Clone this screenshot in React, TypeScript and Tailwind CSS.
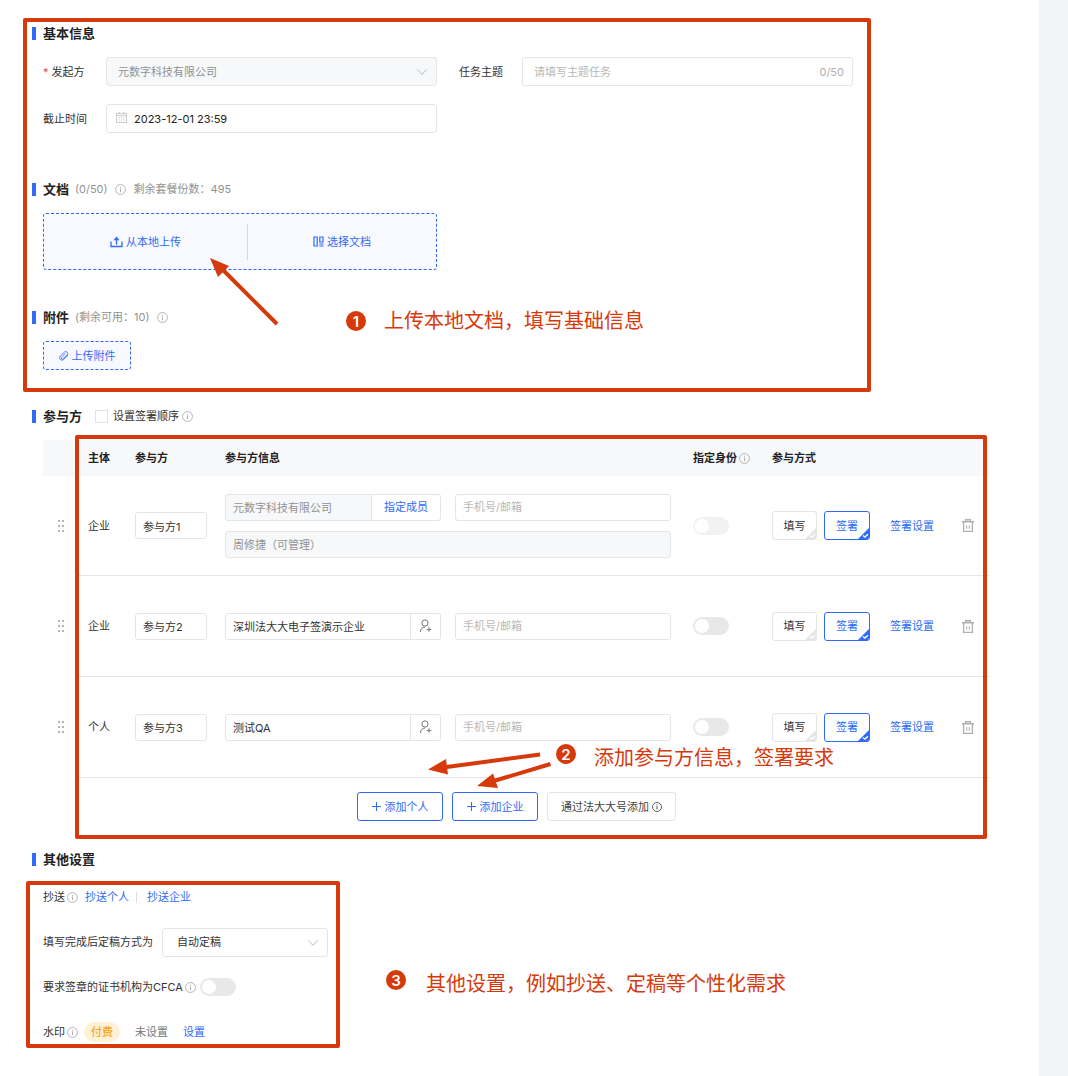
import type { ReactNode } from 'react';

function Info({ dark = false }: { dark?: boolean }) {
  return (
    <svg
      viewBox="0 0 12 12"
      fill="none"
      stroke="currentColor"
      className={dark ? 'size-[10px] shrink-0 text-[#444]' : 'size-[11px] shrink-0 text-[#b0b0b0]'}
      aria-hidden="true"
    >
      <circle cx="6" cy="6" r="5.4" strokeWidth="1" />
      <path d="M6 4.900v4M6 2.900v1.200" strokeWidth="1.100" />
    </svg>
  );
}

function Chevron() {
  return (
    <svg viewBox="0 0 12 8" fill="none" stroke="#bbb" className="pointer-events-none absolute right-[9px] top-[11px] h-[8px] w-[12px]" aria-hidden="true">
      <path d="M1.2 1.4 6 6.4l4.800-5" />
    </svg>
  );
}

function Calendar() {
  return (
    <svg viewBox="0 0 12 12" fill="none" stroke="#bdbdbd" className="absolute left-[10px] top-[8px] size-[11px]" aria-hidden="true">
      <path d="M.5 1.500h11v10H.5zM.5 4h11M3.500.2v2.400M8.500.2v2.400" strokeWidth="0.9" />
      <path d="M2.800 6.300h6.800M2.800 8.700h6.800" strokeWidth="1" strokeDasharray="1.200 1.400" />
    </svg>
  );
}

function UploadIcon() {
  return (
    <svg viewBox="0 0 13 12" fill="none" stroke="currentColor" className="h-[12px] w-[13px]" aria-hidden="true">
      <path d="M1 5.500v5h11v-5M6.500 8.800V2" strokeWidth="1.300" />
      <path d="M3.500 4.200 6.500.6l3 3.600z" fill="currentColor" stroke="none" />
    </svg>
  );
}

function DocsIcon() {
  return (
    <svg viewBox="0 0 11 11" fill="none" stroke="currentColor" className="size-[11px]" aria-hidden="true">
      <path d="M1 1h3.200v9H1zM6.800 1H10v5H6.800zM6.200 8h4.400M6.200 10h4.400" strokeWidth="1.200" />
    </svg>
  );
}

function ClipIcon() {
  return (
    <svg viewBox="0 0 24 24" fill="none" stroke="currentColor" strokeWidth="2" className="size-[10px]" aria-hidden="true">
      <path d="M22 9.500 11.800 20.200a6 6 0 0 1-8.600-8.500L13 2.800a4.600 4.600 0 0 1 6.600 6.500L10 18.300a2.600 2.600 0 0 1-3.800-3.600l9-8.800" />
    </svg>
  );
}

function PersonAdd() {
  return (
    <svg viewBox="0 0 13 14" fill="none" stroke="#777" className="h-[14px] w-[13px]" aria-hidden="true">
      <circle cx="6" cy="4" r="3.100" />
      <path d="M1.500 13c0-3 1.800-5 4.600-5M10 8.200v4.600M7.700 10.500h4.600" />
    </svg>
  );
}

function Trash() {
  return (
    <svg viewBox="0 0 12 13" fill="none" stroke="#b0b0b0" className="h-[13px] w-[12px]" aria-hidden="true">
      <path d="M0 2.700h12M3.600 2.500V.8h4.800v1.700" strokeWidth="1.400" />
      <path d="M1.600 3v9.300h8.800V3" strokeWidth="1.300" />
      <path d="M4.700 6.200v3.600M7.300 6.200v3.600" />
    </svg>
  );
}

function Grip() {
  return (
    <svg viewBox="0 0 7 13" fill="#b5b5b5" className="ml-[15px] h-[13px] w-[7px]" aria-hidden="true">
      {[0, 5, 10].map((y) => (
        <g key={y}>
          <rect x="0" y={y} width="2" height="2" />
          <rect x="4" y={y} width="2" height="2" />
        </g>
      ))}
    </svg>
  );
}

function Plus() {
  return (
    <svg viewBox="0 0 9 9" fill="none" stroke="currentColor" className="size-[9px]" aria-hidden="true">
      <path d="M4.500 0v9M0 4.500h9" strokeWidth="1.100" />
    </svg>
  );
}

function Title({ text, children }: { text: string; children?: ReactNode }) {
  return (
    <div className="flex h-[22px] items-center">
      <span className="h-[13px] w-1 bg-[#2f6bf6]" />
      <h2 className="ml-[7px] text-[13px] font-bold text-[#222]">{text}</h2>
      {children}
    </div>
  );
}

function Toggle({ label, disabled = false, id }: { label?: string; disabled?: boolean; id?: string }) {
  return (
    <input
      type="checkbox"
      role="switch"
      id={id}
      aria-label={label}
      disabled={disabled}
      className="block h-[18px] w-[36px] shrink-0 appearance-none rounded-full bg-[#e8e8e8] p-[2px] before:block before:size-[14px] before:rounded-full before:bg-white checked:bg-[#2f6bf6] checked:before:ml-[18px] disabled:bg-[#f2f2f2]"
    />
  );
}

function Choice({ text, on = false }: { text: string; on?: boolean }) {
  return (
    <button
      type="button"
      aria-pressed={on}
      className={
        on
          ? 'relative h-[29px] w-[46px] overflow-hidden rounded-[3px] border border-[#2f6bf6] text-[#2f6bf6]'
          : 'relative h-[29px] w-[45px] overflow-hidden rounded-[3px] border border-[#e5e5e5] text-[#333]'
      }
    >
      {text}
      <svg viewBox="0 0 13 13" fill="none" className="absolute bottom-[-1px] right-[-1px] size-[13px]" aria-hidden="true">
        <path d="M13 0v13H0z" fill={on ? '#2f6bf6' : '#e5e5e5'} />
        <path d="m6 8.600 1.800 1.500L11 7.200" stroke="#fff" strokeWidth="1.300" />
      </svg>
    </button>
  );
}

function Note({ n, children, className }: { n: number; children: ReactNode; className: string }) {
  return (
    <div className={className}>
      <span className="flex size-[20px] shrink-0 items-center justify-center rounded-full bg-[#d6390a] text-[15px] font-semibold leading-none text-white">
        {n}
      </span>
      <p className="whitespace-nowrap text-[20px] leading-[28px] text-[#d6390a]">{children}</p>
    </div>
  );
}

const inputBase = 'block h-[27px] w-full min-w-0 border border-[#e5e5e5] px-[7px] text-[#333] outline-none placeholder:text-[#b8b8b8]';
const fieldBase = 'block h-[29px] w-full appearance-none rounded-[3px] border border-[#e5e5e5] outline-none placeholder:text-[#b8b8b8]';

const parties = [
  { kind: '企业', role: '参与方1', name: '元数字科技有限公司', member: '周修捷（可管理）' },
  { kind: '企业', role: '参与方2', name: '深圳法大大电子签演示企业', member: '' },
  { kind: '个人', role: '参与方3', name: '测试QA', member: '' },
];

export default function App() {
  return (
    <div className="flex min-h-screen bg-white font-['Inter','Noto_Sans_CJK_SC',sans-serif] text-[11px] leading-[16px] text-[#333]">
      <main className="min-w-0 flex-1 pt-[18px]">
        <section className="relative ml-[23px] mr-[168px] rounded-[2px] border-4 border-[#d6390a] pb-[18px] pl-[5px] pr-[14px]">
          <Title text="基本信息" />
          <div className="ml-[11px] mt-[13px] grid grid-cols-2 gap-x-[22px] gap-y-[18px]">
            <div className="flex items-center">
              <label htmlFor="sender" className="w-[63px] shrink-0">
                <span className="mr-[3px] text-[#f04a3a]">*</span>发起方
              </label>
              <div className="relative min-w-0 flex-1">
                <select id="sender" disabled className={`${fieldBase} bg-[#f7f8fa] pl-[11px] text-[#929292] opacity-100`}>
                  <option>元数字科技有限公司</option>
                </select>
                <Chevron />
              </div>
            </div>
            <div className="flex items-center">
              <label htmlFor="subject" className="w-[63px] shrink-0">任务主题</label>
              <div className="relative min-w-0 flex-1">
                <input id="subject" placeholder="请填写主题任务" className={`${fieldBase} pl-[11px] pr-[44px]`} />
                <span className="absolute right-[9px] top-[7px] text-[#b0b0b0]">0/50</span>
              </div>
            </div>
            <div className="flex items-center">
              <label htmlFor="deadline" className="w-[63px] shrink-0">截止时间</label>
              <div className="relative min-w-0 flex-1">
                <input id="deadline" defaultValue="2023-12-01 23:59" className={`${fieldBase} pl-[27px] text-[#222]`} />
                <Calendar />
              </div>
            </div>
          </div>

          <div className="mt-[45px]">
            <Title text="文档">
              <span className="ml-[6px] mr-[7px] text-[#929292]">(0/50)</span>
              <Info />
              <span className="ml-[8px] text-[#929292]">剩余套餐份数：495</span>
            </Title>
          </div>
          <div className="ml-[11px] mt-[13px] grid grid-cols-2 gap-x-[22px]">
            <div className="flex h-[57px] items-center rounded-[3px] border border-dashed border-[#2f6bf6] bg-[#f8f9fe] text-[#2f6bf6]">
              <button type="button" className="flex h-[36px] w-[52%] items-center justify-center gap-[3px] border-r border-[#cbd9fb]">
                <UploadIcon />从本地上传
              </button>
              <button type="button" className="flex h-[36px] flex-1 items-center justify-center gap-[3px]">
                <DocsIcon />选择文档
              </button>
            </div>
          </div>

          <div className="mt-[36px]">
            <Title text="附件">
              <span className="ml-[6px] mr-[8px] text-[#929292]">(剩余可用：10)</span>
              <Info />
            </Title>
          </div>
          <button
            type="button"
            className="ml-[11px] mt-[13px] flex h-[29px] w-[88px] items-center justify-center gap-[3px] rounded-[3px] border border-dashed border-[#2f6bf6] bg-[#f8f9fe] text-[#2f6bf6]"
          >
            <ClipIcon />上传附件
          </button>

          <svg viewBox="0 0 70 70" className="absolute left-[182px] top-[235px] size-[70px]" aria-hidden="true">
            <path d="M68 67 12 11" stroke="#d6390a" strokeWidth="4" />
            <path d="m1 1 19 8-11 11z" fill="#d6390a" />
          </svg>
          <Note n={1} className="absolute left-[319px] top-[285px] flex items-center gap-[18px]">
            上传本地文档，填写基础信息
          </Note>
        </section>

        <section className="ml-[32px] mr-[49px] mt-[13px]">
          <Title text="参与方">
            <label className="ml-[13px] flex items-center gap-[5px]">
              <input type="checkbox" className="size-[13px] appearance-none border border-[#e2e2e2] bg-white checked:bg-[#2f6bf6]" />
              设置签署顺序
            </label>
            <span className="ml-[3px]"><Info /></span>
          </Title>

          <div className="relative ml-[11px] mt-[13px] pb-[18px]">
            <table className="w-full table-fixed border-separate border-spacing-0 text-left">
              <colgroup>
                <col className="w-[36px]" />
                <col className="w-[56px]" />
                <col className="w-[90px]" />
                <col />
                <col className="w-[79px]" />
                <col className="w-[218px]" />
              </colgroup>
              <thead>
                <tr className="h-[36px] bg-[#f7f8fa] font-bold text-[#222]">
                  <th />
                  <th className="pl-[9px]">主体</th>
                  <th>参与方</th>
                  <th>参与方信息</th>
                  <th>
                    <span className="flex items-center gap-[2px]">指定身份<Info /></span>
                  </th>
                  <th>参与方式</th>
                </tr>
              </thead>
              <tbody>
                {parties.map((p) => (
                  <tr key={p.role} className="h-[101px] *:border-b *:border-[#e6e6e6] first:h-[100px]">
                    <td className="border-b-0!"><Grip /></td>
                    <td className="pl-[9px]">{p.kind}</td>
                    <td>
                      <input aria-label={`${p.role}名称`} defaultValue={p.role} className={`${inputBase} max-w-[72px] rounded-[3px]`} />
                    </td>
                    <td className="pr-[22px]">
                      <div className="flex gap-[14px]">
                        <div className="flex min-w-0 flex-1">
                          <input
                            aria-label={`${p.role}主体`}
                            defaultValue={p.name}
                            disabled={!!p.member}
                            className={`${inputBase} flex-1 rounded-l-[3px] disabled:bg-[#f7f8fa] disabled:text-[#929292]`}
                          />
                          {p.member ? (
                            <button type="button" className="h-[27px] w-[69px] shrink-0 rounded-r-[3px] border border-l-0 border-[#e5e5e5] text-[#2f6bf6]">
                              指定成员
                            </button>
                          ) : (
                            <button
                              type="button"
                              aria-label="选择联系人"
                              className="flex h-[27px] w-[30px] shrink-0 items-center justify-center rounded-r-[3px] border border-l-0 border-[#e5e5e5]"
                            >
                              <PersonAdd />
                            </button>
                          )}
                        </div>
                        <div className="min-w-0 flex-1">
                          <input aria-label={`${p.role}联系方式`} placeholder="手机号/邮箱" className={`${inputBase} rounded-[3px]`} />
                        </div>
                      </div>
                      {p.member && (
                        <input
                          aria-label="成员"
                          disabled
                          defaultValue={p.member}
                          className={`${inputBase} mt-[10px] rounded-[3px] disabled:bg-[#f7f8fa] disabled:text-[#929292]`}
                        />
                      )}
                    </td>
                    <td><Toggle label={`${p.role}指定身份`} disabled={!!p.member} /></td>
                    <td>
                      <div className="flex items-center">
                        <Choice text="填写" />
                        <span className="ml-[7px]"><Choice text="签署" on /></span>
                        <a href="#sign" className="ml-[20px] text-[#2f6bf6]">签署设置</a>
                        <button type="button" aria-label="删除" className="ml-[28px]"><Trash /></button>
                      </div>
                    </td>
                  </tr>
                ))}
              </tbody>
            </table>
            <div className="mt-[14px] flex justify-center gap-[9px]">
              <button type="button" className="flex h-[29px] w-[86px] items-center justify-center gap-[4px] rounded-[3px] border border-[#2f6bf6] text-[#2f6bf6]">
                <Plus />添加个人
              </button>
              <button type="button" className="flex h-[29px] w-[86px] items-center justify-center gap-[4px] rounded-[3px] border border-[#2f6bf6] text-[#2f6bf6]">
                <Plus />添加企业
              </button>
              <button type="button" className="flex h-[29px] w-[129px] items-center justify-center gap-[3px] rounded-[3px] border border-[#e5e5e5] text-[#444]">
                通过法大大号添加<Info dark />
              </button>
            </div>

            <div className="pointer-events-none absolute bottom-0 left-[32px] right-[3px] top-[-5px] rounded-[2px] border-4 border-[#d6390a]" />
            <svg viewBox="0 0 126 40" className="absolute left-[384px] top-[311px] h-[40px] w-[126px]" aria-hidden="true">
              <path d="M113 3.500 16 16.500M123.500 13 60 32" stroke="#d6390a" strokeWidth="4" />
              <path d="m1 18.500 18-10.500 2 15.500zM50 35l16-12.500 5 14.500z" fill="#d6390a" />
            </svg>
            <Note n={2} className="absolute left-[513px] top-[304px] flex items-start gap-[18px]">
              添加参与方信息，签署要求
            </Note>
          </div>
        </section>

        <section className="relative">
          <div className="ml-[32px] mt-[9px]">
            <Title text="其他设置" />
          </div>
          <div className="ml-[26px] mt-[11px] flex w-[314px] max-w-full flex-col gap-[21px] rounded-[2px] border-4 border-[#d6390a] pl-[13px] pr-[8px]">
            <div className="flex h-6 items-center">
              抄送
              <span className="ml-[2px]"><Info /></span>
              <a href="#cc-person" className="ml-[7px] text-[#2f6bf6]">抄送个人</a>
              <span className="ml-[7px] h-[11px] border-l border-[#e0e0e0]" />
              <a href="#cc-company" className="ml-[10px] text-[#2f6bf6]">抄送企业</a>
            </div>
            <div className="flex h-6 items-center">
              <label htmlFor="finalize" className="shrink-0">填写完成后定稿方式为</label>
              <div className="relative ml-[9px] min-w-0 flex-1">
                <select id="finalize" className={`${fieldBase} bg-white pl-[14px] text-[#333]`}>
                  <option>自动定稿</option>
                </select>
                <Chevron />
              </div>
            </div>
            <div className="flex h-6 items-center">
              <label htmlFor="cfca">要求签章的证书机构为CFCA</label>
              <span className="ml-[2px] mr-[4px]"><Info /></span>
              <Toggle id="cfca" />
            </div>
            <div className="flex h-6 items-center">
              水印
              <span className="ml-[2px]"><Info /></span>
              <span className="ml-[6px] rounded-full bg-[#fff1d6] px-[7px] py-[2px] font-medium text-[#f5a623]">付费</span>
              <span className="ml-[15px] text-[#777]">未设置</span>
              <a href="#watermark" className="ml-[15px] text-[#2f6bf6]">设置</a>
            </div>
          </div>
          <Note n={3} className="absolute left-[386px] top-[122px] flex items-start gap-[20px]">
            其他设置，例如抄送、定稿等个性化需求
          </Note>
        </section>
      </main>
      <aside className="w-[29px] shrink-0 bg-[#f3f4f6]" />
    </div>
  );
}
